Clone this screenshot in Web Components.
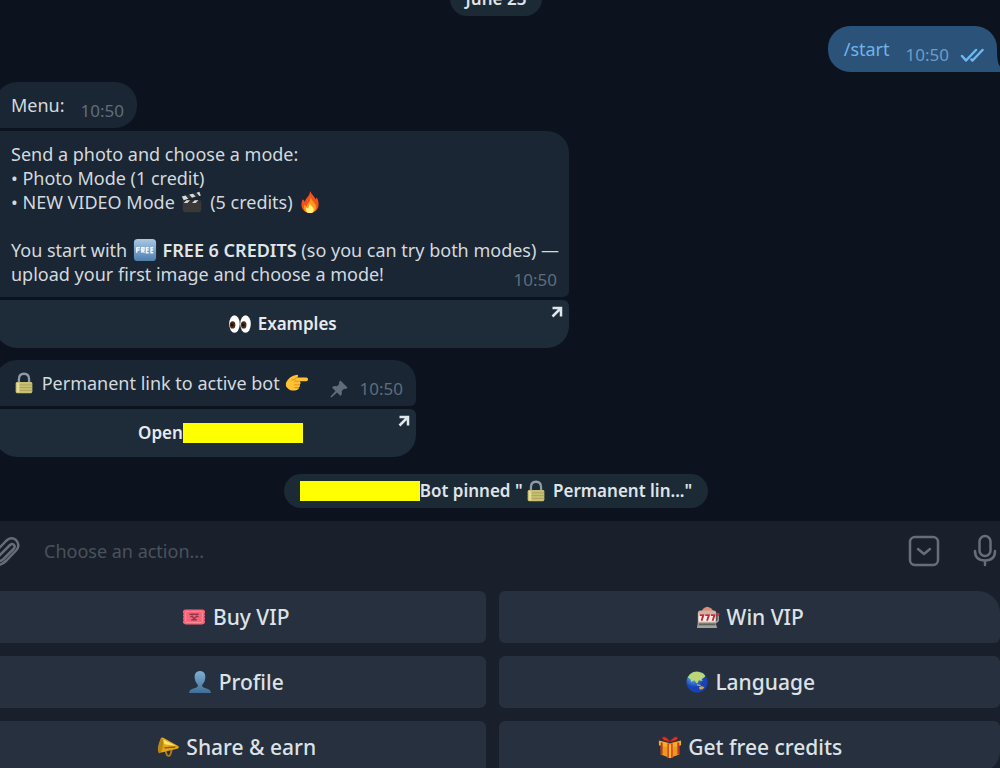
<!DOCTYPE html>
<html lang="en">
<head>
<meta charset="utf-8">
<meta name="viewport" content="width=device-width">
<title>Bot chat</title>
<style>
  html { background: #19202b; }
  body {
    margin: 0;
    overflow: hidden;
    font-family: "Noto Sans", "Open Sans", sans-serif;
    font-size: 18px;
    line-height: 24px;
    color: #d3d9df;
    --chat: #0c131e;
    --bubble: #1a2633;
    --inline-button: #1e2b39;
    --panel: #19202b;
    --key: #26303e;
    --muted: #5f6d7b;
  }
  b { font-weight: 600; color: #e0e5e9; }
</style>
</head>
<body>
<chat-app>
  <chat-pill class="date">June 23</chat-pill>
  <chat-message out>
    <a slot="text" href="#start">/start</a>
  </chat-message>
  <chat-message joined-below>Menu:</chat-message>
  <chat-message wide joined-above class="intro">
    Send a photo and choose a mode:<br>
    • Photo Mode (1 credit)<br>
    • NEW VIDEO Mode <emoji-icon name="clapper"></emoji-icon> (5 credits) <emoji-icon name="fire"></emoji-icon><br>
    <br>
    You start with <emoji-icon name="free"></emoji-icon> <b>FREE 6 CREDITS</b> (so you can try both modes) — upload your first image and choose a mode!
    <link-button slot="action"><emoji-icon name="eyes"></emoji-icon> Examples</link-button>
  </chat-message>
  <chat-message pinned class="permanent">
    <emoji-icon name="lock"></emoji-icon> Permanent link to active bot <emoji-icon name="point"></emoji-icon>
    <link-button slot="action">Open<hidden-name overhang></hidden-name></link-button>
  </chat-message>
  <chat-pill class="service"><hidden-name></hidden-name>Bot pinned "<emoji-icon name="lock"></emoji-icon> Permanent lin..."</chat-pill>
  <message-composer slot="composer"></message-composer>
  <reply-keyboard slot="keyboard">
    <key-button><emoji-icon name="ticket"></emoji-icon> Buy VIP</key-button>
    <key-button class="top-end"><emoji-icon name="slot"></emoji-icon> Win VIP</key-button>
    <key-button><emoji-icon name="person"></emoji-icon> Profile</key-button>
    <key-button><emoji-icon name="globe"></emoji-icon> Language</key-button>
    <key-button><emoji-icon name="horn"></emoji-icon> Share &amp; earn</key-button>
    <key-button class="bottom-end"><emoji-icon name="gift"></emoji-icon> Get free credits</key-button>
  </reply-keyboard>
</chat-app>

<script>
class Base extends HTMLElement {
  constructor() {
    super();
    this.attachShadow({ mode: "open" }).innerHTML = this.constructor.markup;
  }
}

class ChatApp extends Base {
  static markup = `
    <style>
      :host { display: flex; flex-direction: column; min-height: 100vh; }
      main {
        flex: 1 0 auto;
        display: flex; flex-direction: column; align-items: flex-start;
        margin: -18px 0 0 -8px;
        padding: 0 3px 13px;
        background: var(--chat);
      }
      ::slotted(chat-message) { margin-top: 10px; }
      ::slotted(chat-message[joined-above]) { margin-top: 3px; }
      ::slotted(.intro) { margin-bottom: 2px; }
      ::slotted(.service) { margin-top: 17px; }
    </style>
    <main><slot></slot></main>
    <slot name="composer"></slot>
    <slot name="keyboard"></slot>`;
}

class ChatPill extends Base {
  static markup = `
    <style>
      :host {
        display: flex; align-items: center; align-self: center;
        box-sizing: border-box; height: 34px; padding: 0 16px;
        border-radius: 17px; background: #1c2a36;
        color: #dfe4e8; font-size: 17px; font-weight: 600; white-space: pre;
      }
    </style>
    <slot></slot>`;
}

class ChatMessage extends Base {
  static markup = `
    <style>
      :host { display: block; width: fit-content; max-width: 574px; }
      :host([out]) { align-self: flex-end; color: #70b4ec; --bubble: #2b5279; --muted: #6f9cc6; }
      .bubble {
        position: relative;
        display: flex; align-items: flex-end; gap: 16px;
        padding: 11px 13px 7px 16px;
        border-radius: 22px; background: var(--bubble);
      }
      .text { padding-bottom: 4px; }
      .meta { display: flex; align-items: center; gap: 11px; line-height: 20px; font-size: 17px; color: var(--muted); }
      :host([wide]) .bubble { display: grid; padding-right: 6px; }
      :host([wide]) .text, :host([wide]) .meta { grid-area: 1 / 1; }
      :host([wide]) .meta { justify-self: end; align-self: end; padding-right: 6px; }
      :host([joined-below]) .bubble { border-bottom-left-radius: 6px; }
      :host([wide]) .bubble { border-radius: 6px 22px 6px 6px; }
      :host([pinned]) .bubble { border-radius: 22px 22px 6px 6px; gap: 20px; }
      :host([out]) .bubble { border-bottom-right-radius: 0; }
      .tail, .ticks, .pin { display: none; }
      :host([out]) .ticks, :host([pinned]) .pin { display: block; }
      :host([out]) .tail { display: block; position: absolute; right: -8px; bottom: 0; }
      ::slotted(a) { color: inherit; text-decoration: none; }
      ::slotted(link-button) { margin-top: 3px; }
    </style>
    <div class="bubble">
      <div class="text"><slot name="text"></slot><slot></slot></div>
      <div class="meta">
        <svg class="pin" width="18" height="18" viewBox="0 0 18 18" fill="currentColor"><path d="M10.500 0.500 L17.500 7.500 L16 9 L14 8.800 L11.800 11 Q12.500 14 10.500 16 L7 12.500 L1.500 17.500 L0.500 16.500 L5.500 11 L2 7.500 Q4 5.500 7 6.200 L9.200 4 L9 2 Z"/></svg>
        <time>10:50</time>
        <svg class="ticks" width="24" height="18" viewBox="0 0 24 18" fill="none" stroke="#6db8f2" stroke-width="2.500" stroke-linecap="round" stroke-linejoin="round"><path d="M2 10 L6 14.500 L16 4 M11.500 13.500 L12.500 14.500 L22.500 4"/></svg>
      </div>
      <svg class="tail" width="8" height="24" viewBox="0 0 8 24"><path d="M0 0 C0 13 1 18 7 23 V24 H0 Z" fill="#2b5279"/></svg>
    </div>
    <slot name="action"></slot>`;
}

class LinkButton extends Base {
  static markup = `
    <style>
      :host { display: block; }
      a {
        position: relative;
        display: flex; align-items: center; justify-content: center;
        height: 48px; border-radius: 6px 6px 22px 22px;
        background: var(--inline-button); color: #e6eaee;
        font-size: 17px; font-weight: 600; text-decoration: none; white-space: pre;
      }
      svg { position: absolute; top: 6px; right: 6px; }
    </style>
    <a href="#open"><slot></slot><svg width="12" height="12" viewBox="0 0 12 12" fill="none" stroke="#dfe6ec" stroke-width="2.500"><path d="M1.500 2 H10 V10.500 M10 2 L1.500 10.500"/></svg></a>`;
}

class HiddenName extends Base {
  static markup = `
    <style>
      :host { display: inline-block; flex: none; width: 120px; height: 20px; background: #ffff00; }
      :host([overhang]) { margin-right: -30px; }
    </style>`;
}

class MessageComposer extends Base {
  static markup = `
    <style>
      :host { display: block; background: var(--panel); }
      form { display: flex; align-items: center; height: 60px; padding-bottom: 10px; margin: 0 0 0 -12px; }
      button { display: flex; padding: 0; border: 0; background: none; color: #666e79; }
      input {
        flex: 1; min-width: 0; margin-left: 24px; padding: 0; border: 0; outline: 0;
        background: none; color: #d3d9df; font: inherit;
      }
      input::placeholder { color: #4a525d; opacity: 1; }
      .commands { margin-right: 33px; }
      .voice { margin-right: 3px; }
      svg { fill: none; stroke: currentColor; stroke-linecap: round; stroke-linejoin: round; }
    </style>
    <form>
      <button type="button" aria-label="Attach a file">
        <svg width="32" height="32" viewBox="0 0 32 32" stroke-width="2.500"><path d="M11 21 L22 10 Q24.500 8 26 10 Q27.500 12 25.500 14 L15 24.500 Q10 28 7 25 Q4 21 7.500 17 L18 6 Q23 1 28 5 Q32.500 10 28.500 15 L18.500 25.500 Q15 29 11 30"/></svg>
      </button>
      <input type="text" aria-label="Message" placeholder="Choose an action...">
      <button class="commands" type="button" aria-label="Toggle keyboard">
        <svg width="32" height="32" viewBox="0 0 32 32" stroke-width="2.500"><rect x="2" y="2" width="28" height="28" rx="5"/><path d="M10 14 L16 19 L22 14"/></svg>
      </button>
      <button class="voice" type="button" aria-label="Record voice">
        <svg width="24" height="34" viewBox="0 0 24 34" stroke-width="2.500"><rect x="6.500" y="2" width="11" height="20" rx="5.500"/><path d="M2 17 C2 24 6.500 26.500 12 26.500 S22 24 22 17 M12 27 V31"/></svg>
      </button>
    </form>`;
}

class ReplyKeyboard extends Base {
  static markup = `
    <style>
      :host {
        display: grid; grid-template-columns: 1fr 1fr; gap: 13px;
        margin-left: -15px; background: var(--panel);
      }
    </style>
    <slot></slot>`;
}

class KeyButton extends Base {
  static markup = `
    <style>
      :host { display: block; --radius: 6px; }
      :host(.top-end) { --radius: 6px 22px 6px 6px; }
      :host(.bottom-end) { --radius: 6px 6px 22px 6px; }
      button {
        display: flex; align-items: center; justify-content: center;
        width: 100%; height: 52px; padding: 0; border: 0;
        border-radius: var(--radius); background: var(--key); color: #dde2e7;
        font: inherit; font-size: 21px; font-weight: 500; white-space: pre;
      }
    </style>
    <button type="button"><slot></slot></button>`;
}

const EMOJI = {
  clapper: `<path d="M2 12 H22 V20 Q22 23 19 23 H5 Q2 23 2 20 Z" fill="#3b3938"/><path d="M1 6 L20 1 L21.500 5 L3 10 Z M2 10 H22 V13 H2 Z" fill="#343434"/><path d="M1 6 L5 5 L8 8.500 L3 10 Z M9 4 L13 3 L16 6 L12 7.500 Z M17 2 L20 1 L21.500 5 L20 5.500 Z M3 13 L6 10 H10 L7 13 Z M12 13 L15 10 H19 L16 13 Z" fill="#d5dadd"/>`,
  fire: `<path d="M12 0 C14 4 17 6 18 9 L19.500 7 C23 14 22 23 12 24 C3 23 1 16 4 9 Q6 10 6.500 12 C7 7 12 6 12 0 Z" fill="#f4511e"/><path d="M12.500 6 C13 10 17 12 18 15 C20 20 16 24 12 24 C7 24 4 20 6 15 L8.500 17 C9 13 13 12 12.500 6 Z" fill="#ff9c1a"/><path d="M12 13 C12 16 16 17 16 20 C16 23 14 24 12 24 C9 24 7 22 8 18 L10 19 Z" fill="#fff27a"/>`,
  free: `<defs><linearGradient id="g" x2="0" y2="1"><stop stop-color="#a9c8e4"/><stop offset="1" stop-color="#4e7fae"/></linearGradient></defs><rect y="0" width="24" height="24" rx="4" fill="url(#g)"/><path d="M3 9 V15 M3 9.500 H6.500 M3 12 H6 M8.500 15 V9.500 H11 V12 H8.500 L11.500 15 M16 9.500 H13.500 V15 H16 M13.500 12 H16 M21 9.500 H18.500 V15 H21 M18.500 12 H21" fill="none" stroke="#eef5fb" stroke-width="1.500"/>`,
  eyes: `<ellipse cx="6" cy="12" rx="5.700" ry="9.500" fill="#fff"/><ellipse cx="18" cy="12" rx="5.700" ry="9.500" fill="#fff"/><ellipse cx="4" cy="13" rx="3" ry="4" fill="#4e2a16"/><ellipse cx="16" cy="13" rx="3" ry="4" fill="#4e2a16"/><circle cx="3.500" cy="13" r="1.500" fill="#111"/><circle cx="15.500" cy="13" r="1.500" fill="#111"/>`,
  lock: `<path d="M6.500 12 V8 Q6.500 2 12 2 T17.500 8 V12" fill="none" stroke="#8d9ba5" stroke-width="2.500"/><rect x="3" y="11" width="18" height="12" rx="1.500" fill="#c9bf72"/><path d="M3 14 H21 M3 17 H21 M3 20 H21" stroke="#aaa15b"/><path d="M4 12 H7 V22 H4 Z" fill="#e2da99"/>`,
  point: `<path d="M0 12 C2 7 6 4 12 3 Q14 3 13 5 L12 6 H22 Q24 6 24 8 T22 10 H15 Q17 12 15 14 Q16 16 14 17 Q14 20 10 20 C5 21 1 18 0 15 Z" fill="#ffc233"/><path d="M9 10 H15 M9 14 H15 M9 17 H14 M6 9 Q9 9 12 6" fill="none" stroke="#dd8c16"/>`,
  ticket: `<path d="M3 4 H21 Q24 4 24 7 Q22.500 8.500 24 10 Q22.500 12 24 14 Q22.500 15.500 24 17 Q24 20 21 20 H3 Q0 20 0 17 Q1.500 15.500 0 14 Q1.500 12 0 10 Q1.500 8.500 0 7 Q0 4 3 4 Z" fill="#f8647a"/><rect x="3" y="6" width="18" height="12" rx="1" fill="none" stroke="#ff8e9b"/><path d="M7 9 H17 M8 12 L10 11 L12 14 L15 11 L17 12 M9 15 H15" fill="none" stroke="#93384a" stroke-width="1.500"/>`,
  slot: `<path d="M5 7 Q6 2 11 1 Q17 2 18 7 Z" fill="#e18b75"/><path d="M1 8 Q1 5 4 5 H18 Q21 5 21 8 V19 H1 Z" fill="#c9b4a5"/><rect x="2" y="9" width="18" height="8" fill="#f3eceb"/><path d="M3 10 H7 L5 16 M9 10 H13 L11 16 M15 10 H19 L17 16" fill="none" stroke="#c42832" stroke-width="2"/><path d="M1 18 H20 L22 24 H0 Z" fill="#9ea19c"/><path d="M2 20 H20" stroke="#5e625d" stroke-width="2"/><path d="M21 18 L23 16 V10" fill="none" stroke="#aaa" stroke-width="1.500"/><circle cx="23" cy="9" r="1.500" fill="#d22b39"/>`,
  person: `<defs><linearGradient id="p" x2="0" y2="1"><stop stop-color="#7fafd0"/><stop offset="1" stop-color="#3f6f98"/></linearGradient></defs><path d="M12 0 C17 0 18.500 4 17.500 9 Q17 13 14.500 15 V17 Q15 18 19 19 Q23.500 20 24 24 H0 Q.5 20 5 19 Q9 18 9.500 17 V15 Q7 13 6.500 9 C5.500 4 7 0 12 0 Z" fill="url(#p)"/>`,
  globe: `<defs><radialGradient id="w" cx=".35" cy=".25"><stop stop-color="#64c7ef"/><stop offset="1" stop-color="#1742b8"/></radialGradient></defs><circle cx="12" cy="12" r="11.500" fill="url(#w)"/><path d="M2 7 Q6 0 13 1 Q20 2 21 6 L17 9 L18 11 L14 10 L12 14 L9 10 L6 12 L5 9 Z" fill="#bdd675"/><path d="M14 18 Q17 15 20 18 Q18 21 15 20 Z" fill="#d3a343"/><path d="M12 15 L16 16" stroke="#9ab95e" stroke-width="1.500"/>`,
  horn: `<path d="M9 16 L11 21 Q14 23 15 19 L16 15" fill="none" stroke="#b37b10" stroke-width="2"/><path d="M4 3 Q5 1 7 2 L23 11 Q25 13 22 14 L5 18 Q1 18 1 14 Z" fill="#e0a51c"/><ellipse cx="4" cy="11" rx="2.500" ry="8" transform="rotate(10 4 11)" fill="#b98710"/><path d="M7 4 L21 11 L8 9 Z" fill="#ffe16a"/><path d="M8 13 L20 12" stroke="#8a5f08" stroke-width="1.500"/>`,
  gift: `<path d="M2 8 L12 11 L22 8 V20 L12 24 L2 20 Z" fill="#e79b20"/><path d="M0 5 L12 8 L24 5 V10 L12 13 L0 10 Z" fill="#f0ae2b"/><path d="M9 8 H15 V24 H9 Z" fill="#e4481f"/><path d="M11 9 H13 V24 H11 Z" fill="#ffc53d"/><path d="M12 6 Q3 5 4 2 Q6 -1 12 6 Q18 -1 20 2 Q21 5 12 6 Z" fill="#e33629" stroke="#b81d18"/><path d="M3 7 V20 M21 7 V20" stroke="#c6341e" stroke-width="2"/>`
};

class EmojiIcon extends HTMLElement {
  connectedCallback() {
    if (this.shadowRoot) return;
    this.attachShadow({ mode: "open" }).innerHTML = `
      <style>
        :host { display: inline-block; flex: none; width: 24px; height: 24px; margin: 0 1px; vertical-align: top; white-space: normal; }
        svg { display: block; width: 100%; height: 100%; }
      </style>
      <svg viewBox="-1 -1 26 26" aria-hidden="true">${EMOJI[this.getAttribute("name")]}</svg>`;
  }
}

customElements.define("emoji-icon", EmojiIcon);
customElements.define("hidden-name", HiddenName);
customElements.define("chat-pill", ChatPill);
customElements.define("link-button", LinkButton);
customElements.define("chat-message", ChatMessage);
customElements.define("message-composer", MessageComposer);
customElements.define("key-button", KeyButton);
customElements.define("reply-keyboard", ReplyKeyboard);
customElements.define("chat-app", ChatApp);
</script>
</body>
</html>
